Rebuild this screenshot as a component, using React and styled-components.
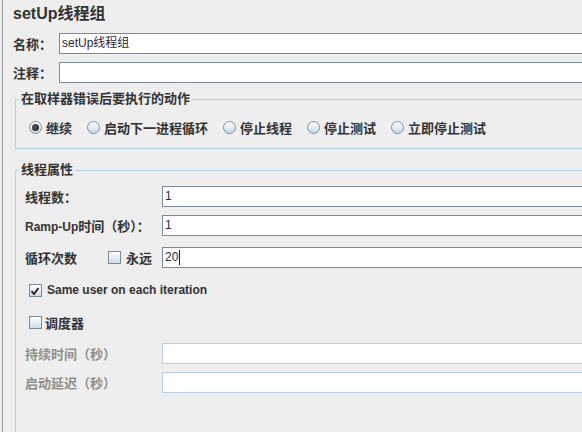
import React from 'react'
import styled, { createGlobalStyle } from 'styled-components'

const GlobalStyle = createGlobalStyle`
  html, body {
    margin: 0;
    padding: 0;
    background: #eeeeee;
    overflow: hidden;
  }
  body {
    font-family: "Liberation Sans", "Noto Sans CJK SC", sans-serif;
    color: #333333;
  }
  #root {
    width: 640px;
    height: 432px;
    overflow: hidden;
  }
`

const Panel = styled.div`
  display: flex;
  flex-direction: column;
  box-sizing: border-box;
  height: 470px;
  margin-left: 2px;
  padding-left: 10px;
  border-left: 1px solid #9a9a9a;
`

const Title = styled.div`
  height: 28px;
  line-height: 28px;
  font-size: 16px;
  font-weight: bold;
  color: #333333;
`

const Row = styled.div`
  display: flex;
  align-items: center;
  margin-top: ${(p) => p.$mt || 0}px;
  padding-left: ${(p) => p.$pl || 0}px;
`

const Label = styled.span`
  flex: none;
  width: ${(p) => (p.$w ? `${p.$w}px` : 'auto')};
  font-size: 13px;
  font-weight: bold;
  white-space: nowrap;
  color: ${(p) => (p.$disabled ? '#8f8f8f' : '#333333')};
`

const Latin = styled.span`
  font-size: 12px;
`

const TextField = styled.div`
  flex: 1;
  box-sizing: border-box;
  height: 21px;
  padding-left: 2px;
  line-height: 19px;
  font-size: 12px;
  background: #ffffff;
  color: #2a2a3a;
  border: 1px solid ${(p) => (p.$disabled ? '#b8cfe5' : '#7a8a99')};
  display: flex;
  align-items: center;
`

const Caret = styled.span`
  display: inline-block;
  width: 1px;
  height: 15px;
  margin-left: 1px;
  background: #222222;
`

const Group = styled.fieldset`
  flex: ${(p) => (p.$grow ? 1 : 'none')};
  min-width: 0;
  margin: ${(p) => p.$mt}px 0 0 2px;
  padding: 0 0 ${(p) => p.$pb || 0}px 0;
  border: 1px solid #b8cfe5;
`

const Legend = styled.legend`
  margin-left: 3px;
  padding: 0 2px;
  font-size: 13px;
  font-weight: bold;
  line-height: 16px;
  color: #333333;
`

const GroupBody = styled.div`
  padding-left: 9px;
`

const Option = styled.label`
  display: flex;
  align-items: center;
  gap: 4px;
  margin-right: 15px;
  font-size: 13px;
  font-weight: bold;
  white-space: nowrap;
`

const RadioDot = styled.span`
  position: relative;
  box-sizing: border-box;
  width: 13px;
  height: 13px;
  border-radius: 50%;
  border: 1px solid #7f8fa2;
  background: linear-gradient(#ffffff, #c6d6e8);

  &::after {
    content: '';
    display: ${(p) => (p.$on ? 'block' : 'none')};
    position: absolute;
    left: 2px;
    top: 2px;
    width: 7px;
    height: 7px;
    border-radius: 50%;
    background: radial-gradient(circle at 40% 40%, #555555, #1e1e1e);
  }
`

const Box = styled.span`
  flex: none;
  display: flex;
  align-items: center;
  justify-content: center;
  box-sizing: border-box;
  width: 13px;
  height: 13px;
  border: 1px solid #7a8a99;
  background: linear-gradient(#ffffff, #cddceb);
`

const CheckText = styled.span`
  margin-left: ${(p) => p.$ml}px;
  font-size: ${(p) => p.$size || 13}px;
  font-weight: bold;
  white-space: nowrap;
  color: #333333;
`

const LoopLabel = styled.div`
  flex: none;
  display: flex;
  align-items: center;
  width: 137px;
`

const Check = ({ on }) => (
  <Box>
    {on && (
      <svg width="11" height="11" viewBox="0 0 11 11">
        <polyline points="1.5,6 4,9 8.5,3" fill="none" stroke="#1e1e1e" strokeWidth="1.8" />
      </svg>
    )}
  </Box>
)

const actions = ['继续', '启动下一进程循环', '停止线程', '停止测试', '立即停止测试']

export default function App() {
  return (
    <>
      <GlobalStyle />
      <Panel>
        <Title>setUp线程组</Title>
        <Row $mt={5}>
          <Label $w={46}>名称：</Label>
          <TextField>setUp线程组</TextField>
        </Row>
        <Row $mt={8}>
          <Label $w={46}>注释：</Label>
          <TextField />
        </Row>

        <Group $mt={8} $pb={11}>
          <Legend>在取样器错误后要执行的动作</Legend>
          <GroupBody>
            <Row $mt={11} $pl={4}>
              {actions.map((a, i) => (
                <Option key={a}>
                  <RadioDot $on={i === 0} />
                  {a}
                </Option>
              ))}
            </Row>
          </GroupBody>
        </Group>

        <Group $mt={13} $grow>
          <Legend>线程属性</Legend>
          <GroupBody>
            <Row $mt={8}>
              <Label $w={137}>线程数：</Label>
              <TextField>1</TextField>
            </Row>
            <Row $mt={8}>
              <Label $w={137}>
                <Latin>Ramp-Up</Latin>时间（秒）：
              </Label>
              <TextField>1</TextField>
            </Row>
            <Row $mt={11}>
              <LoopLabel>
                <Label $w={83}>循环次数</Label>
                <Check />
                <CheckText $ml={5}>永远</CheckText>
              </LoopLabel>
              <TextField>
                20
                <Caret />
              </TextField>
            </Row>
            <Row $mt={15} $pl={4}>
              <Check on />
              <CheckText $ml={5} $size={12}>
                Same user on each iteration
              </CheckText>
            </Row>
            <Row $mt={16} $pl={4}>
              <Check />
              <CheckText $ml={3}>调度器</CheckText>
            </Row>
            <Row $mt={11}>
              <Label $w={137} $disabled>
                持续时间（秒）
              </Label>
              <TextField $disabled />
            </Row>
            <Row $mt={8}>
              <Label $w={137} $disabled>
                启动延迟（秒）
              </Label>
              <TextField $disabled />
            </Row>
          </GroupBody>
        </Group>
      </Panel>
    </>
  )
}
